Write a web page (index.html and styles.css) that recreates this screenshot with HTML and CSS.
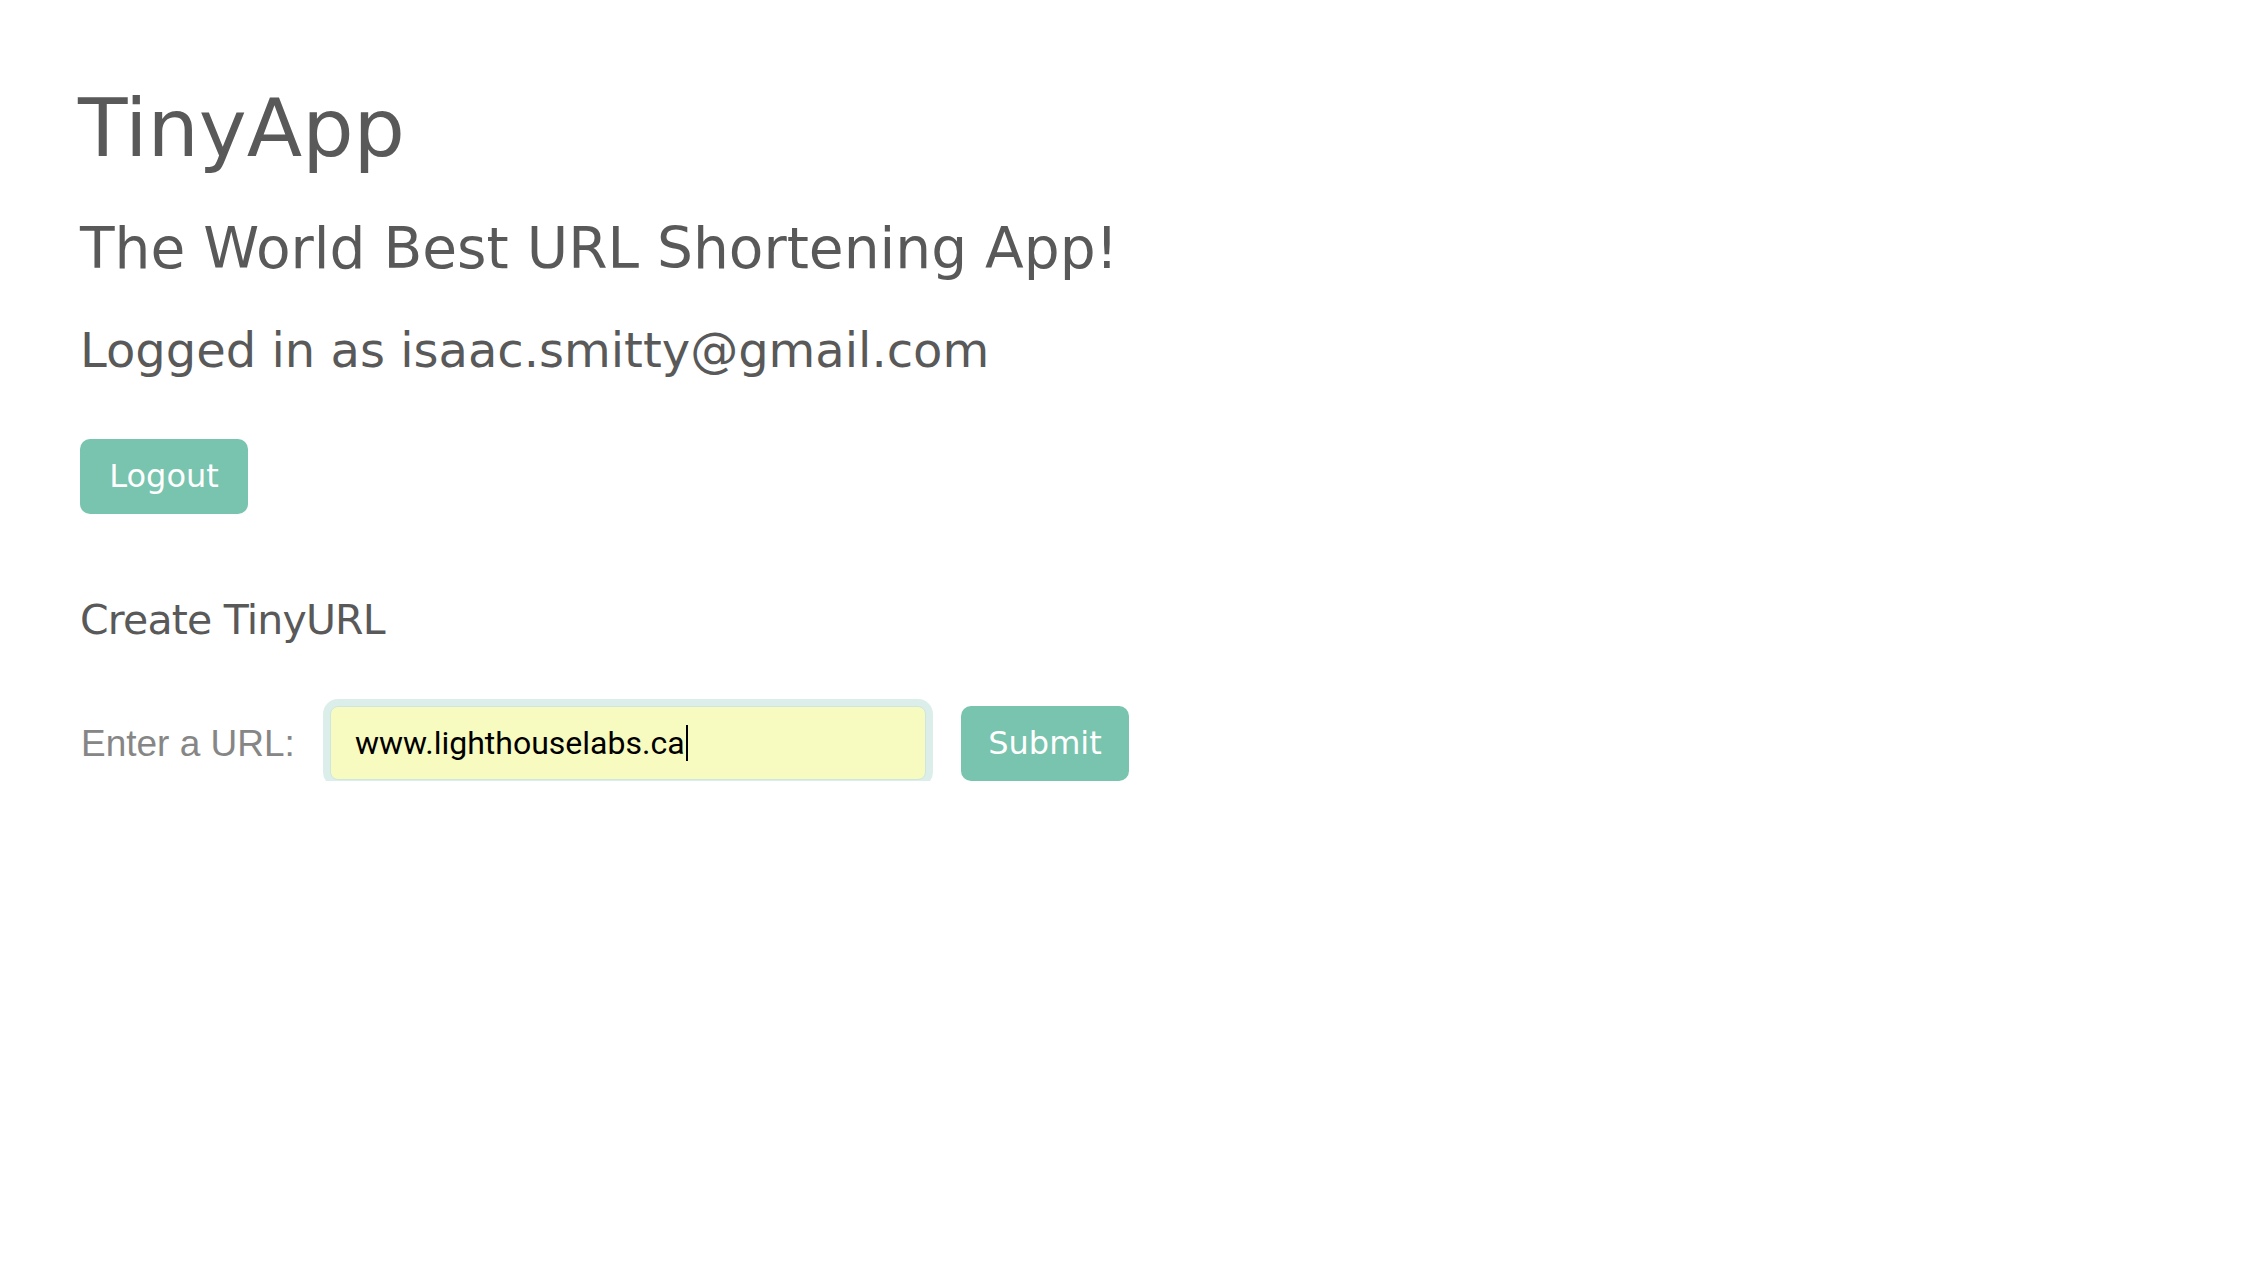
FILE: index.html
```html
<!DOCTYPE html>
<html lang="en">
<head>
<meta charset="utf-8">
<title>TinyApp</title>
<link rel="stylesheet" href="styles.css">
</head>
<body>
<main class="page">
  <h1 class="title">TinyApp</h1>
  <h2 class="subtitle">The World Best URL Shortening App!</h2>
  <p class="logged">Logged in as isaac.smitty@gmail.com</p>
  <form class="logout-form">
    <button type="button" class="btn">Logout</button>
  </form>
  <h3 class="create">Create TinyURL</h3>
  <form class="url-row">
    <label class="url-label">Enter a URL:</label>
    <div class="url-input">www.lighthouselabs.ca<span class="caret"></span></div>
    <button type="button" class="btn btn-submit">Submit</button>
  </form>
</main>
</body>
</html>
```
FILE: styles.css
```css
html, body {
  margin: 0;
  padding: 0;
  background: #ffffff;
}
.page {
  padding: 88px 0 0 78px;
  font-family: "DejaVu Sans", sans-serif;
  color: #595959;
}
.title {
  margin: 0;
  font-size: 81px;
  line-height: 1;
  font-weight: normal;
}
.subtitle {
  margin: 51px 0 0 2px;
  font-size: 56.6px;
  line-height: 1;
  font-weight: normal;
}
.logged {
  margin: 49px 0 0 2px;
  font-size: 48px;
  line-height: 1;
}
.logout-form {
  margin: 65px 0 0 2px;
}
.btn {
  display: flex;
  align-items: center;
  justify-content: center;
  width: 168px;
  height: 75px;
  border: none;
  border-radius: 10px;
  background: #78c4ae;
  color: #ffffff;
  font-family: "DejaVu Sans", sans-serif;
  font-size: 32px;
  line-height: 1;
  padding: 0;
}
.create {
  margin: 86px 0 0 2px;
  font-size: 41px;
  line-height: 1;
  font-weight: normal;
  letter-spacing: -0.8px;
}
.url-row {
  display: flex;
  align-items: center;
  margin: 65px 0 0 3px;
  height: 75px;
}
.url-label {
  font-family: "Liberation Sans", sans-serif;
  font-size: 37px;
  line-height: 1;
  color: #868686;
  width: 249px;
}
.url-input {
  box-sizing: border-box;
  width: 596px;
  height: 74px;
  display: flex;
  align-items: center;
  padding-left: 24px;
  background: #f8fbbf;
  border: 1px solid #cfe6e0;
  border-radius: 8px;
  box-shadow: 0 0 0 7px #dceee9;
  font-family: Roboto, "Liberation Sans", sans-serif;
  font-size: 32px;
  color: #000000;
}
.caret {
  display: inline-block;
  width: 2px;
  height: 36px;
  margin-left: 1px;
  background: #000000;
}
.btn-submit {
  margin-left: 35px;
}
```
